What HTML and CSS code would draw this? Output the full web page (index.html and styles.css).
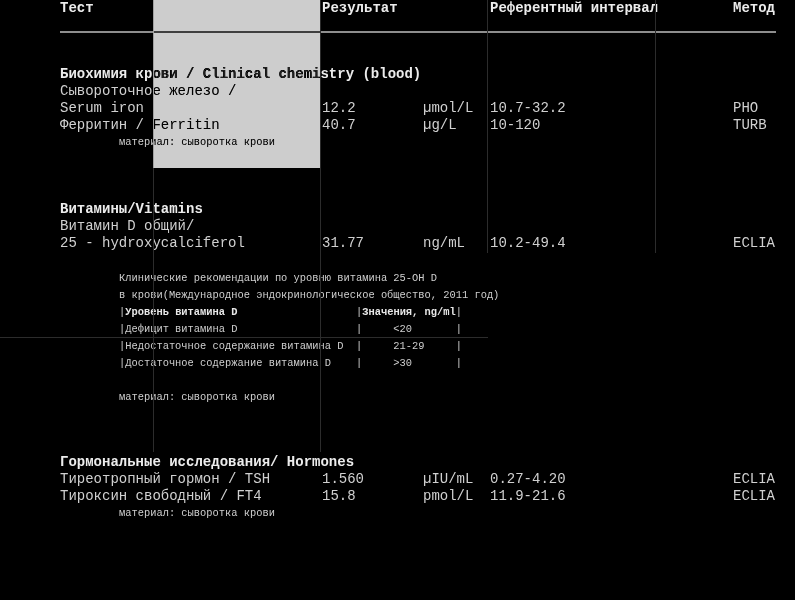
FILE: index.html
```html
<!DOCTYPE html>
<html lang="ru">
<head>
  <meta charset="UTF-8" />
  <meta name="viewport" content="width=device-width, initial-scale=1.0"/>
  <title>Результаты анализов</title>

  <link rel="stylesheet" href="styles.css">
</head>
<body>

  <div class="report">

    <!-- Column headers -->
    <div class="row head">
      <div>Тест</div>
      <div class="span2">Результат</div>
      <div>Референтный интервал</div>
      <div>Метод</div>
    </div>
    <hr class="rule">

    <!-- Clinical chemistry -->
    <section class="group group-chem">
      <h3>Биохимия крови / Clinical chemistry (blood)</h3>
      <div class="row">
        <div>Сывороточное железо /<br>Serum iron</div>
        <div>12.2</div>
        <div>µmol/L</div>
        <div>10.7-32.2</div>
        <div>PHO</div>
      </div>
      <div class="row">
        <div>Ферритин / Ferritin</div>
        <div>40.7</div>
        <div>µg/L</div>
        <div>10-120</div>
        <div>TURB</div>
      </div>
      <p class="note">материал: сыворотка крови</p>
    </section>

    <!-- Vitamins -->
    <section class="group group-vit">
      <h3>Витамины/Vitamins</h3>
      <div class="row">
        <div>Витамин D общий/<br>25 - hydroxycalciferol</div>
        <div>31.77</div>
        <div>ng/mL</div>
        <div>10.2-49.4</div>
        <div>ECLIA</div>
      </div>
<pre class="note note-block">Клинические рекомендации по уровню витамина 25-OH D
в крови(Международное эндокринологическое общество, 2011 год)
|<b>Уровень витамина D</b>                   |<b>Значения, ng/ml</b>|
|Дефицит витамина D                   |     &lt;20       |
|Недостаточное содержание витамина D  |     21-29     |
|Достаточное содержание витамина D    |     &gt;30       |

материал: сыворотка крови</pre>
    </section>

    <!-- Hormones -->
    <section class="group group-horm">
      <h3>Гормональные исследования/ Hormones</h3>
      <div class="row">
        <div>Тиреотропный гормон / TSH</div>
        <div>1.560</div>
        <div>µIU/mL</div>
        <div>0.27-4.20</div>
        <div>ECLIA</div>
      </div>
      <div class="row">
        <div>Тироксин свободный / FT4</div>
        <div>15.8</div>
        <div>pmol/L</div>
        <div>11.9-21.6</div>
        <div>ECLIA</div>
      </div>
      <p class="note">материал: сыворотка крови</p>
    </section>

    <!-- Faint scan guides and the highlighted block lying over the text -->
    <div class="guide guide-v guide-a"></div>
    <div class="guide guide-v guide-b"></div>
    <div class="guide guide-v guide-c"></div>
    <div class="guide guide-v guide-d"></div>
    <div class="guide guide-h"></div>
    <div class="shade"></div>
  </div>

</body>
</html>
```

FILE: styles.css
```css
/* Page base */
html, body {
  background: #000;
}

body {
  margin: 0;
  font-family: "Liberation Mono", "DejaVu Sans Mono", monospace;
  font-size: 14px;
  line-height: 17px;
  color: #d0d0d0;
}

/* Report sheet */
.report {
  position: relative;
  isolation: isolate;
  width: 795px;
  height: 600px;
  padding: 0 19px 0 60px;
  box-sizing: border-box;
  overflow: hidden;
  background: #000;
}

/* Result row: test / result / unit / reference / method */
.row {
  display: grid;
  grid-template-columns: 262px 101px 67px 243px 1fr;
}

.row > div {
  align-self: end;
  white-space: nowrap;
}

/* Header line */
.head {
  font-weight: bold;
  color: #ececec;
}

.head .span2 {
  grid-column: span 2;
}

.rule {
  margin: 14px 0 0;
  border: none;
  height: 2px;
  background: #8e8e8e;
}

/* Test groups */
.group-chem { margin-top: 33px; }
.group-vit { margin-top: 50px; }
.group-horm { margin-top: 48px; }

h3 {
  margin: 0;
  font-size: 14px;
  font-weight: bold;
  color: #ececec;
}

/* Small comment text */
.note {
  margin: 0 0 0 59px;
  font-family: "Liberation Mono", "DejaVu Sans Mono", monospace;
  font-size: 10.4px;
  line-height: 17px;
  color: #cfcfcf;
}

.note-block {
  margin-top: 18px;
  white-space: pre;
}

.note b {
  color: #e8e8e8;
}

/* Faint guide lines */
.guide {
  position: absolute;
  background: #2c2c2c;
}

.guide-v {
  top: 0;
  width: 1px;
}

.guide-a { left: 153px; height: 452px; }
.guide-b { left: 320px; height: 452px; }
.guide-c { left: 487px; height: 253px; }
.guide-d { left: 655px; height: 253px; }

.guide-h {
  left: 0;
  top: 337px;
  width: 488px;
  height: 1px;
}

/* Light block over the first column */
.shade {
  position: absolute;
  left: 153px;
  top: 0;
  width: 167px;
  height: 168px;
  background: #cdcdcd;
  mix-blend-mode: difference;
}
```
